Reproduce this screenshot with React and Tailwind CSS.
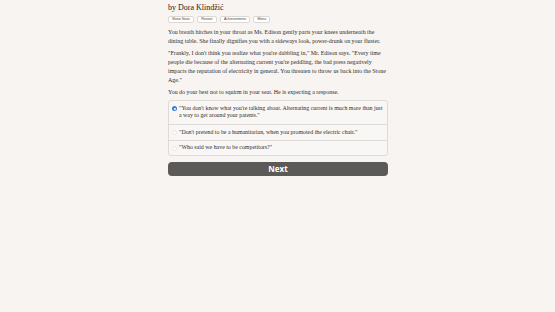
import React from "react";

const serif = { fontFamily: '"Liberation Serif", "DejaVu Serif", serif' };

function Radio({ checked }) {
  return checked ? (
    <span className="mt-[1.5px] flex h-[5px] w-[5px] shrink-0 items-center justify-center rounded-full bg-[#3b7dd8]">
      <span className="h-[2px] w-[2px] rounded-full bg-white" />
    </span>
  ) : (
    <span className="mt-[1.5px] h-[5px] w-[5px] shrink-0 rounded-full border-[0.5px] border-[#e8e4e0] bg-white" />
  );
}

export default function App() {
  const btn =
    "rounded-[2px] border border-[#dcd8d4] bg-white px-[3px] text-[3.5px] leading-[5px] text-[#444]";
  return (
    <div className="min-h-[312px] w-[555px] bg-[#f7f4f1] text-[#2e2e2e]" style={serif}>
      <div className="ml-[168px] w-[220px] pt-[3px]">
        <div className="text-[8px] leading-[10px] text-[#222]">by Dora Klindžić</div>
        <div className="mt-[3px] flex gap-[3.5px]" style={{ fontFamily: '"Liberation Sans", sans-serif' }}>
          <span className={btn}>Show Stats</span>
          <span className={btn}>Restart</span>
          <span className={btn}>Achievements</span>
          <span className={btn}>Menu</span>
        </div>
        <div className="mt-[5px] text-[5.95px] leading-[9px]">
          <p>
            You breath hitches in your throat as Ms. Edison gently parts your knees underneath the
            dining table. She finally dignifies you with a sideways look, power-drunk on your fluster.
          </p>
          <p className="mt-[3px]">
            "Frankly, I don't think you realize what you're dabbling in," Mr. Edison says. "Every time
            people die because of the alternating current you're peddling, the bad press negatively
            impacts the reputation of electricity in general. You threaten to throw us back into the Stone
            Age."
          </p>
          <p className="mt-[2.5px]">You do your best not to squirm in your seat. He is expecting a response.</p>
        </div>
        <div className="mt-[3.5px] rounded-[3px] border border-[#dedad6] bg-[#f9f7f5] text-[5.9px] leading-[7.5px]">
          <div className="flex gap-[2px] px-[3px] py-[3.75px]">
            <Radio checked />
            <span>
              "You don't know what you're talking about. Alternating current is much more than just a way
              to get around your patents."
            </span>
          </div>
          <div className="flex gap-[2px] border-t border-[#dedad6] px-[3px] py-[4px]">
            <Radio />
            <span>"Don't pretend to be a humanitarian, when you promoted the electric chair."</span>
          </div>
          <div className="flex gap-[2px] border-t border-[#dedad6] px-[3px] py-[3px]">
            <Radio />
            <span>"Who said we have to be competitors?"</span>
          </div>
        </div>
        <button
          className="mt-[6px] flex h-[14px] w-[220px] items-center justify-center rounded-[4px] bg-[#5b5a58] text-[8px] font-bold text-white"
          style={{ fontFamily: '"Open Sans", "Liberation Sans", sans-serif' }}
        >
          Next
        </button>
      </div>
    </div>
  );
}
